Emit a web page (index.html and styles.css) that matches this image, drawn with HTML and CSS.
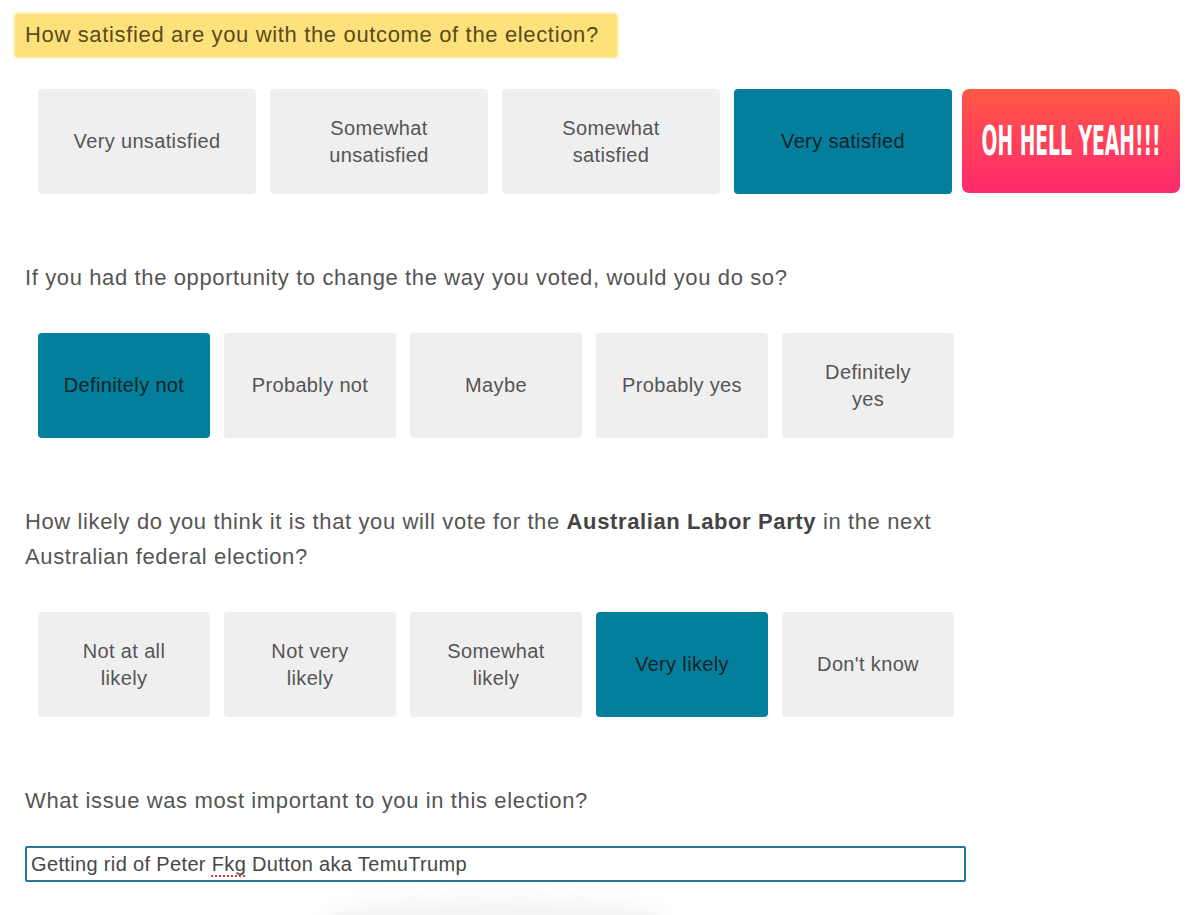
FILE: index.html
```html
<!DOCTYPE html>
<html>
<head>
<meta charset="utf-8">
<link rel="stylesheet" href="styles.css">
</head>
<body>
<div class="page">
  <div class="q-highlight-wrap"><span class="q-highlight">How satisfied are you with the outcome of the election?</span></div>

  <div class="options row1">
    <div class="opt">Very unsatisfied</div>
    <div class="opt">Somewhat<br>unsatisfied</div>
    <div class="opt">Somewhat<br>satisfied</div>
    <div class="opt selected">Very satisfied</div>
    <div class="opt hell"><span class="hell-text">OH HELL YEAH!!!</span></div>
  </div>

  <p class="question">If you had the opportunity to change the way you voted, would you do so?</p>

  <div class="options row-small">
    <div class="opt selected">Definitely not</div>
    <div class="opt">Probably not</div>
    <div class="opt">Maybe</div>
    <div class="opt">Probably yes</div>
    <div class="opt">Definitely<br>yes</div>
  </div>

  <p class="question">How likely do you think it is that you will vote for the <b>Australian Labor Party</b> in the next Australian federal election?</p>

  <div class="options row-small">
    <div class="opt">Not at all<br>likely</div>
    <div class="opt">Not very<br>likely</div>
    <div class="opt">Somewhat<br>likely</div>
    <div class="opt selected">Very likely</div>
    <div class="opt">Don't know</div>
  </div>

  <p class="question">What issue was most important to you in this election?</p>

  <div class="text-input">Getting rid of Peter <span class="spell">Fkg</span> Dutton aka TemuTrump</div>

  <div class="shadow-blob"></div>
</div>
</body>
</html>
```

FILE: styles.css
```css
html, body {
  margin: 0;
  padding: 0;
  background: #ffffff;
}
body {
  font-family: "Liberation Sans", Arial, Helvetica, sans-serif;
  color: #555555;
  width: 1200px;
  height: 915px;
  overflow: hidden;
}
.page {
  padding-top: 14px;
}
.q-highlight-wrap {
  padding-left: 15px;
}
.q-highlight {
  display: inline-block;
  height: 43px;
  line-height: 41px;
  padding: 0 18px 0 10px;
  background: #fde27c;
  box-shadow: 0 0 3px 1px #fde68f;
  border-radius: 3px;
  font-size: 22px;
  letter-spacing: 0.65px;
  color: #5a4a1e;
}
.options {
  display: flex;
  gap: 14px;
  margin-left: 38px;
}
.row1 {
  margin-top: 32px;
}
.opt {
  height: 105px;
  background: #efefef;
  border-radius: 4px;
  display: flex;
  align-items: center;
  justify-content: center;
  text-align: center;
  font-size: 20px;
  letter-spacing: 0.35px;
  line-height: 27px;
  color: #555555;
  box-sizing: border-box;
}
.row1 .opt {
  width: 218px;
}
.row-small .opt {
  width: 172px;
}
.opt.selected {
  background: #037f9c;
  color: #10222b;
}
.row1 .opt.hell {
  margin-left: -4px;
  height: 104px;
  border-radius: 7px;
  background: linear-gradient(180deg, #ff5a45 0%, #ff3e5c 55%, #ff2a6c 100%);
  overflow: hidden;
  letter-spacing: 0;
}
.hell-text {
  display: inline-block;
  font-family: "DejaVu Sans", sans-serif;
  font-stretch: condensed;
  font-weight: bold;
  font-size: 40px;
  line-height: 40px;
  color: #ffffff;
  transform: scaleX(0.52);
  white-space: nowrap;
  flex-shrink: 0;
}
.question {
  margin: 66px 0 38px 25px;
  font-size: 22px;
  letter-spacing: 0.62px;
  line-height: 35px;
  color: #555555;
  width: 940px;
}
.question b {
  color: #444444;
}
.text-input {
  margin: -10px 0 0 25px;
  width: 941px;
  height: 36px;
  box-sizing: border-box;
  border: 2px solid #1f7a8f;
  border-radius: 2px;
  padding-left: 4px;
  font-size: 20px;
  letter-spacing: 0.35px;
  line-height: 32px;
  color: #474747;
}
.spell {
  text-decoration: underline dotted #e0403a;
  text-underline-offset: 4px;
  text-decoration-thickness: 2px;
}
.shadow-blob {
  margin: 24px 0 0 330px;
  width: 330px;
  height: 20px;
  border-radius: 50%;
  background: rgba(0,0,0,0.04);
  box-shadow: 0 0 20px 10px rgba(0,0,0,0.04);
}
```
